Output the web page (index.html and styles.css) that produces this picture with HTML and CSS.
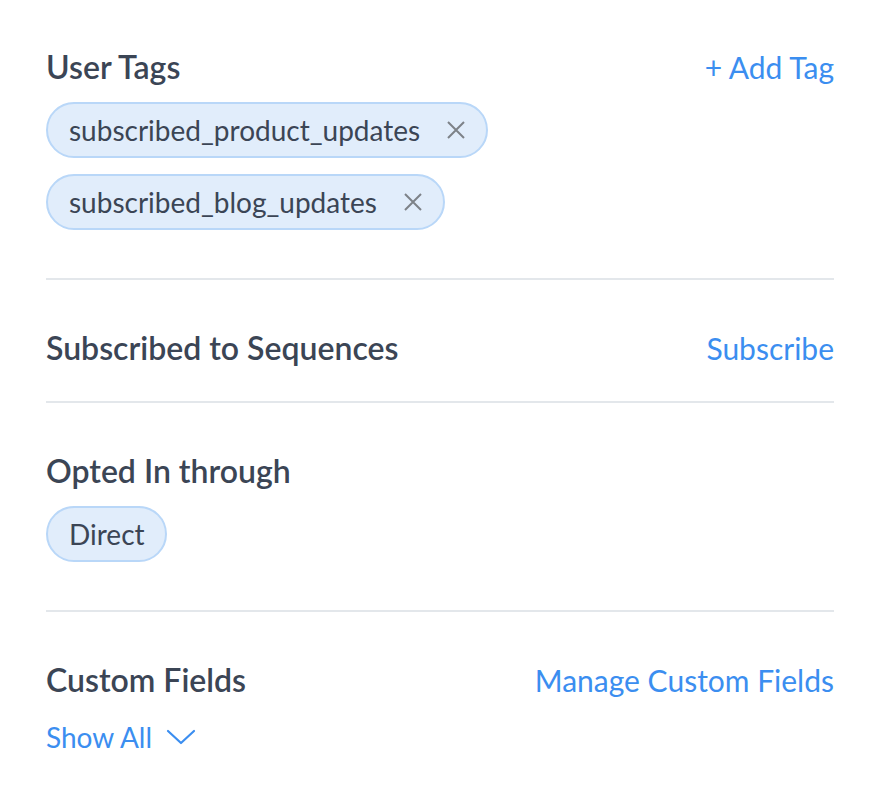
FILE: index.html
```html
<!DOCTYPE html>
<html>
<head>
<meta charset="utf-8">
<link rel="stylesheet" href="styles.css">
</head>
<body>
<div class="panel">
  <section class="section section-first">
    <div class="section-head">
      <h2 class="title">User Tags</h2>
      <a class="link">+ Add Tag</a>
    </div>
    <div class="tags">
      <span class="tag">subscribed_product_updates
        <svg class="tag-x" viewBox="0 0 20 20" width="20" height="20"><path d="M2 2 L18 18 M18 2 L2 18" stroke="#7d8288" stroke-width="2" fill="none"/></svg>
      </span>
      <span class="tag">subscribed_blog_updates
        <svg class="tag-x" viewBox="0 0 20 20" width="20" height="20"><path d="M2 2 L18 18 M18 2 L2 18" stroke="#7d8288" stroke-width="2" fill="none"/></svg>
      </span>
    </div>
  </section>
  <section class="section section-empty">
    <div class="section-head">
      <h2 class="title">Subscribed to Sequences</h2>
      <a class="link">Subscribe</a>
    </div>
  </section>
  <section class="section">
    <div class="section-head">
      <h2 class="title">Opted In through</h2>
    </div>
    <div class="tags">
      <span class="tag">Direct</span>
    </div>
  </section>
  <section class="section section-last">
    <div class="section-head">
      <h2 class="title">Custom Fields</h2>
      <a class="link">Manage Custom Fields</a>
    </div>
    <a class="link show-all">Show All
      <svg class="chev" viewBox="0 0 30 16" width="30" height="16"><path d="M2 2 L15 14 L28 2" stroke="#3b8ef0" stroke-width="2.2" fill="none" stroke-linecap="round" stroke-linejoin="round"/></svg>
    </a>
  </section>
</div>
</body>
</html>
```
FILE: styles.css
```css
* { box-sizing: border-box; }
html, body { margin: 0; background: #ffffff; }
body { font-family: Lato, "Noto Sans", sans-serif; color: #3b4555; }
.panel { padding: 49px 54px 0 46px; }
.section { padding: 50px 0 48px; border-bottom: 2px solid #e3e7eb; }
.section-first { padding-top: 0; }
.section-empty { padding-bottom: 35px; }
.section-last { border-bottom: none; }
.section-head { display: flex; justify-content: space-between; align-items: center; height: 36px; }
.title { margin: 0; font-size: 32px; font-weight: 600; line-height: 36px; color: #3b4555; }
.link { font-size: 30px; line-height: 36px; color: #3b8ef0; text-decoration: none; cursor: pointer; }
.tags { display: flex; flex-direction: column; align-items: flex-start; gap: 16px; margin-top: 17px; }
.tag { display: inline-flex; align-items: center; gap: 26px; height: 56px; padding: 0 20px 0 21px; border: 2px solid #b9d7f8; border-radius: 28px; background: #e1edfb; font-size: 28px; color: #3b4555; }
.tag-x { flex: none; }
.show-all { display: inline-flex; align-items: center; gap: 14px; margin-top: 23px; font-size: 28px; line-height: 32px; }
.chev { flex: none; }
```
